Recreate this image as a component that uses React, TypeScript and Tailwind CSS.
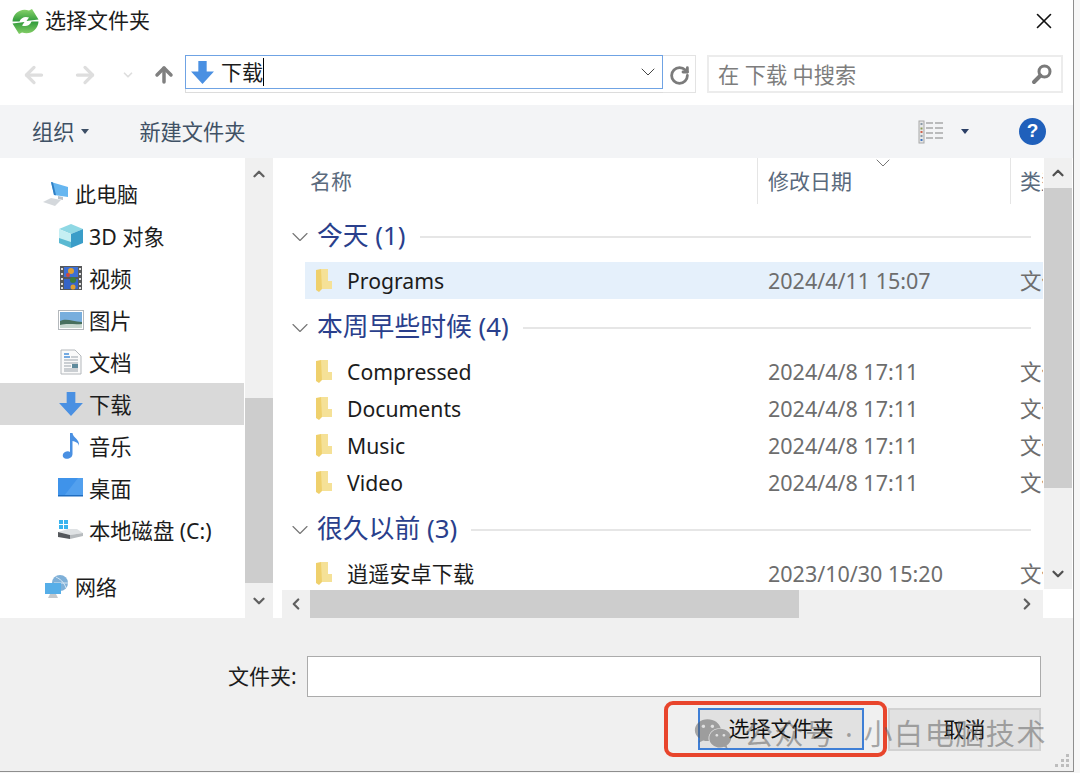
import { ArrowLeft, ArrowRight, ArrowUp, ChevronDown, ChevronLeft, ChevronRight, ChevronUp, RotateCw, X } from "lucide-react";
import { FaWeixin } from "react-icons/fa";
import type { ReactNode } from "react";

const FONT = "font-['Noto_Sans','Noto_Sans_CJK_SC',sans-serif]";

function AppIcon() {
  return (
    <svg width="27" height="27" viewBox="0 0 27 27" className="shrink-0">
      <defs>
        <linearGradient id="top-arrow" x1="0" y1="0" x2="0" y2="1">
          <stop offset="0" stopColor="#8ad46c" />
          <stop offset="1" stopColor="#2f9a3a" />
        </linearGradient>
        <linearGradient id="bottom-arrow" x1="0" y1="0" x2="0" y2="1">
          <stop offset="0" stopColor="#2f9a3a" />
          <stop offset="1" stopColor="#86cf68" />
        </linearGradient>
      </defs>
      <path d="M0.500 13.500C1 5 9 -0.500 17 2.500L20 1L26.500 11.500L14.500 13L17 9.500C13 8 9 9.500 7.500 13.500Z" fill="url(#top-arrow)" />
      <path d="M26.500 13.500C26 22 18 27.500 10 24.500L7 26L0.500 15.500L12.500 14L10 17.500C14 19 18 17.500 19.500 13.500Z" fill="url(#bottom-arrow)" />
    </svg>
  );
}

function DownArrow({ size }: { size: number }) {
  return (
    <svg width={size} height={size} viewBox="0 0 24 24" className="shrink-0">
      <path d="M8 1H16V11H23L12 23L1 11H8Z" fill="#4a90e2" />
    </svg>
  );
}

function Folder() {
  return (
    <svg width="17" height="25" viewBox="0 0 17 25" className="shrink-0">
      <path d="M5 1H12V13H16V21H5Z" fill="#f5e197" />
      <path d="M0 2L5 1L6 21L3 24L0 22Z" fill="#efd06c" />
    </svg>
  );
}

function PcIcon() {
  return (
    <svg width="28" height="26" viewBox="0 0 28 26">
      <path d="M15 15L20 16V19L15 18Z" fill="#b9c2cb" />
      <path d="M8 1L25 6V16L11 14Z" fill="#66b6f0" />
      <path d="M8 1L10 1.600L13 14.300L11 14Z" fill="#2f7fc4" />
      <path d="M0 21L8 17L18 19L12 25Z" fill="#d4d8dc" />
    </svg>
  );
}

function CubeIcon() {
  return (
    <svg width="26" height="26" viewBox="0 0 26 26">
      <path d="M13 1L25 6L13 11L1 6Z" fill="#8fd8e4" />
      <path d="M1 6L13 11V25L1 20Z" fill="#c6eff3" />
      <path d="M25 6L13 11V25L25 20Z" fill="#3a9dc8" />
      <path d="M1 15L13 19V25L1 20Z" fill="#5ab9d2" />
    </svg>
  );
}

function VideoIcon() {
  return (
    <svg width="24" height="26" viewBox="0 0 24 26">
      <rect x="1" y="1" width="22" height="24" fill="#56585a" />
      <rect x="5" y="2" width="14" height="10" fill="#3d6fd4" />
      <rect x="5" y="14" width="14" height="10" fill="#3564c8" />
      <circle cx="12" cy="6" r="3" fill="#e0a030" />
      <circle cx="9" cy="10" r="2" fill="#d0473a" />
      <circle cx="14" cy="15" r="3" fill="#3c7d3a" />
      <circle cx="14" cy="22" r="2.500" fill="#e0a030" />
      {[3, 8, 13, 18, 22].map((y) => (
        <g key={y}>
          <rect x="2" y={y} width="2" height="2" fill="#ddd" />
          <rect x="20" y={y} width="2" height="2" fill="#ddd" />
        </g>
      ))}
    </svg>
  );
}

function PictureIcon() {
  return (
    <svg width="26" height="20" viewBox="0 0 26 20">
      <rect x="0.500" y="0.500" width="25" height="19" fill="#fff" stroke="#b4b8bc" />
      <rect x="2" y="2" width="22" height="16" fill="#78aedd" />
      <path d="M2 11C8 8 14 11 24 12V18H2Z" fill="#47705e" />
      <path d="M2 15C10 13 16 15 24 14V18H2Z" fill="#c8d8d0" />
    </svg>
  );
}

function DocIcon() {
  return (
    <svg width="22" height="26" viewBox="0 0 22 26">
      <path d="M1 1H15L21 7V25H1Z" fill="#fafafa" stroke="#b4b8bc" />
      <path d="M4 5H9M4 8H10" stroke="#4a90d9" strokeWidth="1.500" />
      <path d="M11 8H18M4 11H18M4 14H18M4 17H11M4 20H18M4 22H18" stroke="#9ba3ab" />
      <rect x="12" y="15" width="6" height="4" fill="#5f8a9c" />
    </svg>
  );
}

function MusicIcon() {
  return (
    <svg width="22" height="28" viewBox="0 0 22 28">
      <path d="M10 1H12.500C13 6 20 7 19 14C18.500 10.500 15 9.500 12.500 9V22C12.500 26 8 27.500 5 26.500C2 25.500 2 21.500 5 20C7 19 9 19.200 10 20Z" fill="#4a90e2" />
    </svg>
  );
}

function DesktopIcon() {
  return (
    <svg width="26" height="20" viewBox="0 0 26 20">
      <rect x="0" y="0" width="25" height="18" fill="#3f93ea" />
      <path d="M6 18L20 0H25V18Z" fill="#52a0ee" />
      <rect x="0" y="17" width="25" height="1.500" fill="#1f6dc0" />
    </svg>
  );
}

function DiskIcon() {
  return (
    <svg width="26" height="20" viewBox="0 0 26 20">
      <rect x="1" y="0" width="4" height="4" fill="#39b4ee" />
      <rect x="6" y="0" width="4" height="4" fill="#39b4ee" />
      <rect x="1" y="5" width="4" height="4" fill="#39b4ee" />
      <rect x="6" y="5" width="4" height="4" fill="#39b4ee" />
      <path d="M0 12L10 9H19L25 13L12 15Z" fill="#dfe2e4" />
      <path d="M0 12L12 15V19L0 17Z" fill="#55585c" />
      <path d="M12 15L25 13V16L12 19Z" fill="#b7bbbe" />
    </svg>
  );
}

function NetworkIcon() {
  return (
    <svg width="26" height="26" viewBox="0 0 26 26">
      <circle cx="16" cy="9" r="8" fill="#7fb0d8" />
      <path d="M12 3C16 5 20 8 22 14M10 9H24" stroke="#d7e7f3" fill="none" />
      <rect x="1" y="9" width="16" height="11" fill="#56aee8" />
      <path d="M6 20H12L14 24H4Z" fill="#c3c8cc" />
    </svg>
  );
}

function SearchGlass() {
  return (
    <svg width="22" height="22" viewBox="0 0 22 22">
      <circle cx="13.500" cy="8.500" r="5.500" fill="none" stroke="#7a7a7a" strokeWidth="3" />
      <path d="M9.500 12.500L3 19" stroke="#7a7a7a" strokeWidth="4" strokeLinecap="round" />
    </svg>
  );
}

function ViewsIcon() {
  return (
    <svg width="26" height="24" viewBox="0 0 26 24">
      <rect x="1" y="1" width="5" height="22" fill="#e6e6e6" stroke="#a8a8a8" />
      <rect x="2.500" y="3" width="2" height="2" fill="#8a9aa8" />
      <rect x="2.500" y="7.500" width="2" height="2" fill="#8a9a58" />
      <rect x="2.500" y="11" width="2" height="2" fill="#d0604a" />
      <rect x="2.500" y="15" width="2" height="2" fill="#8a9aa8" />
      <rect x="2.500" y="19" width="2" height="2" fill="#3f74c0" />
      <path d="M8 3H15M17 3H25M8 8H15M17 8H25M8 13H15M17 13H25M8 18H15M17 18H25" stroke="#828282" strokeWidth="1.200" />
    </svg>
  );
}

function Caret({ color = "#3d4f66" }: { color?: string }) {
  return (
    <svg width="8" height="5" viewBox="0 0 8 5">
      <path d="M0 0H8L4 5Z" fill={color} />
    </svg>
  );
}

function Grip() {
  return (
    <svg width="15" height="14" viewBox="0 0 15 14">
      {[[11, 0], [6, 5], [11, 5], [0, 10], [6, 10], [11, 10]].map(([x, y]) => (
        <rect key={`${x}-${y}`} x={x} y={y} width="3" height="3" fill="#bdbdbd" />
      ))}
    </svg>
  );
}

const sideItems: { icon: ReactNode; label: string; active?: boolean }[] = [
  { icon: <CubeIcon />, label: "3D 对象" },
  { icon: <VideoIcon />, label: "视频" },
  { icon: <PictureIcon />, label: "图片" },
  { icon: <DocIcon />, label: "文档" },
  { icon: <DownArrow size={26} />, label: "下载", active: true },
  { icon: <MusicIcon />, label: "音乐" },
  { icon: <DesktopIcon />, label: "桌面" },
  { icon: <DiskIcon />, label: "本地磁盘 (C:)" },
];

function SideRow({ icon, label, active }: { icon: ReactNode; label: string; active?: boolean }) {
  return (
    <div className={`h-[42px] flex items-center pl-[58px] ${active ? "bg-[#d9d9d9]" : ""}`}>
      <div className="w-[26px] flex justify-center">{icon}</div>
      <span className="ml-[5px] pt-[2px] text-[21.300px] text-[#1c1c1c] whitespace-nowrap">{label}</span>
    </div>
  );
}

function GroupHeader({ title, className = "" }: { title: string; className?: string }) {
  return (
    <div className={`h-[37px] flex items-center pl-[11px] pr-[12px] ${className}`}>
      <ChevronDown size={28} strokeWidth={1} className="text-[#777] shrink-0" />
      <span className="ml-[3px] pb-[2px] text-[25.800px] text-[#2a3f8c] whitespace-nowrap">{title}</span>
      <div className="ml-[14px] flex-1 h-[2px] bg-[#e6e6e6]" />
    </div>
  );
}

function FileRow({ name, date, active, className = "" }: { name: string; date: string; active?: boolean; className?: string }) {
  return (
    <div className={`h-[37px] ml-[30px] flex items-center overflow-hidden ${active ? "bg-[#e5f0fb]" : ""} ${className}`}>
      <div className="w-[42px] pl-[11px] shrink-0">
        <Folder />
      </div>
      <span className="w-[421px] shrink-0 pt-[1px] text-[21.200px] text-[#1c1c1c] whitespace-nowrap">{name}</span>
      <span className="w-[253px] shrink-0 pt-[1px] text-[21.500px] text-[#6d6d6d] whitespace-nowrap">{date}</span>
      <span className="-ml-px pt-[1px] text-[21.500px] text-[#6d6d6d] whitespace-nowrap">文件夹</span>
    </div>
  );
}

export default function App() {
  return (
    <div className={`relative w-[1080px] h-[773px] overflow-hidden bg-[#f7f7f7] ${FONT}`}>
      <div className="w-[1074px] h-[772px] flex flex-col bg-white border-r border-b border-[#8e8e8e]">
        {/* title bar */}
        <div className="h-[42px] flex items-center pl-[12px] pr-[16px] shrink-0">
          <AppIcon />
          <span className="ml-[6px] text-[21px] text-[#1c1c1c]">选择文件夹</span>
          <X size={26} strokeWidth={1.500} className="ml-auto text-[#111]" />
        </div>

        {/* address bar */}
        <div className="h-[63px] pt-[13px] flex items-start shrink-0">
          <div className="w-[185px] h-[40px] flex items-center pl-[21px]">
            <ArrowLeft size={26} strokeWidth={3} className="text-[#dedede]" />
            <ArrowRight size={26} strokeWidth={3} className="ml-[25px] text-[#dedede]" />
            <ChevronDown size={14} strokeWidth={3} className="ml-[23px] text-[#dedede]" />
            <ArrowUp size={24} strokeWidth={3.500} className="ml-[17px] text-[#808080]" />
          </div>
          <div className="w-[478px] h-[38px] border-b border-l border-[#dcdcdc]">
            <div className="h-[34px] -ml-px border border-[#6fa3e4] flex items-center pl-[4px] pr-[2px]">
              <DownArrow size={25} />
              <span className="ml-[6px] pt-[2px] text-[21px] text-[#1c1c1c]">下载</span>
              <div className="w-px h-[28px] bg-black" />
              <ChevronDown size={24} strokeWidth={1} className="ml-auto text-[#444]" />
            </div>
          </div>
          <div className="w-[33px] h-[38px] pt-[2px] border-y border-r border-[#e3e3e3] flex items-center justify-center">
            <RotateCw size={21} strokeWidth={3.200} className="text-[#7b7b7b]" />
          </div>
          <div className="ml-[11px] w-[356px] h-[38px] border-2 border-[#ececec] flex items-center pl-[9px] pr-[8px]">
            <span className="pt-[2px] text-[21.200px] text-[#7d7d7d] whitespace-nowrap">在 下载 中搜索</span>
            <div className="ml-auto">
              <SearchGlass />
            </div>
          </div>
        </div>

        {/* command bar */}
        <div className="h-[53px] bg-[#f3f4f6] flex items-center pl-[32px] pr-[27px] shrink-0">
          <span className="text-[21.200px] text-[#3f5165]">组织</span>
          <div className="ml-[7px]">
            <Caret />
          </div>
          <span className="ml-[50px] text-[21.200px] text-[#3f5165]">新建文件夹</span>
          <div className="ml-auto">
            <ViewsIcon />
          </div>
          <div className="ml-[17px]">
            <Caret color="#2b3f66" />
          </div>
          <div className="ml-[50px] w-[27px] h-[27px] rounded-full bg-[#2060bb] flex items-center justify-center text-white text-[19px] font-bold font-['Liberation_Sans',sans-serif]">
            ?
          </div>
        </div>

        {/* main panes */}
        <div className="h-[460px] flex shrink-0">
          <div className="w-[244px] shrink-0 pt-[15px]">
            <div className="h-[42px] flex items-center pl-[43px]">
              <PcIcon />
              <span className="ml-[4px] pt-[2px] text-[21px] text-[#1c1c1c]">此电脑</span>
            </div>
            {sideItems.map((item) => (
              <SideRow key={item.label} {...item} />
            ))}
            <div className="h-[42px] mt-[15px] flex items-center pl-[44px]">
              <NetworkIcon />
              <span className="ml-[5px] pt-[2px] text-[21px] text-[#1c1c1c]">网络</span>
            </div>
          </div>

          <div className="ml-px w-[28px] shrink-0 bg-[#f0f0f0] flex flex-col items-center">
            <div className="h-[32px] flex items-center justify-center">
              <ChevronUp size={18} strokeWidth={3} className="text-[#606060]" />
            </div>
            <div className="flex-1 w-full flex flex-col justify-end">
              <div className="h-[185px] w-full bg-[#cdcdcd]" />
            </div>
            <div className="h-[35px] flex items-center justify-center">
              <ChevronDown size={18} strokeWidth={3} className="text-[#606060]" />
            </div>
          </div>

          <div className="ml-[2px] w-[768px] shrink-0 flex flex-col">
            <div className="h-[432px] overflow-hidden">
              <div className="h-[46px] flex relative">
                <span className="absolute left-[35px] top-[8px] text-[21px] text-[#5a6a7d]">名称</span>
                <div className="absolute left-[482px] top-0 h-[46px] w-px bg-[#e5e5e5]" />
                <ChevronDown size={24} strokeWidth={1} className="absolute left-[596px] -top-[7px] text-[#777]" />
                <span className="absolute left-[493px] top-[8px] text-[21px] text-[#5a6a7d]">修改日期</span>
                <div className="absolute left-[735px] top-0 h-[46px] w-px bg-[#e5e5e5]" />
                <span className="absolute left-[745px] top-[8px] text-[21px] text-[#5a6a7d] whitespace-nowrap">类型</span>
              </div>
              <GroupHeader title="今天 (1)" className="mt-[14px]" />
              <FileRow name="Programs" date="2024/4/11 15:07" active className="mt-[7px]" />
              <GroupHeader title="本周早些时候 (4)" className="mt-[10px]" />
              <FileRow name="Compressed" date="2024/4/8 17:11" className="mt-[7px]" />
              <FileRow name="Documents" date="2024/4/8 17:11" />
              <FileRow name="Music" date="2024/4/8 17:11" />
              <FileRow name="Video" date="2024/4/8 17:11" />
              <GroupHeader title="很久以前 (3)" className="mt-[10px]" />
              <FileRow name="逍遥安卓下载" date="2023/10/30 15:20" className="mt-[7px]" />
            </div>
            <div className="h-[28px] ml-[7px] bg-[#f0f0f0] flex items-center">
              <div className="w-[28px] flex justify-center">
                <ChevronLeft size={18} strokeWidth={3} className="text-[#606060]" />
              </div>
              <div className="w-[489px] h-full bg-[#cdcdcd]" />
              <div className="ml-auto w-[32px] flex justify-center">
                <ChevronRight size={18} strokeWidth={3} className="text-[#606060]" />
              </div>
            </div>
          </div>

          <div className="ml-px w-[28px] shrink-0 flex flex-col">
            <div className="h-[431px] bg-[#f0f0f0] flex flex-col items-center">
              <div className="h-[30px] flex items-center justify-center">
                <ChevronUp size={18} strokeWidth={3} className="text-[#505050]" />
              </div>
              <div className="w-full h-[300px] bg-[#cdcdcd]" />
              <div className="mt-auto h-[30px] flex items-center justify-center">
                <ChevronDown size={18} strokeWidth={3} className="text-[#505050]" />
              </div>
            </div>
          </div>
        </div>

        {/* footer */}
        <div className="flex-1 bg-[#f0f0f0] relative pl-[228px] pr-[32px] pt-[38px]">
          <div className="flex items-center gap-[10px]">
            <span className="text-[21px] text-[#1c1c1c] whitespace-nowrap">文件夹:</span>
            <div className="flex-1 h-[41px] bg-white border border-[#ababab]" />
          </div>
          <div className="mt-[11px] flex justify-end gap-[24px]">
            <div className="w-[166px] h-[42px] bg-[#e1e1e1] border-2 border-[#3f7fd6] flex items-center justify-center text-[21px] text-[#111]">
              选择文件夹
            </div>
            <div className="w-[153px] h-[43px] bg-[#e1e1e1] border-2 border-[#d2d2d2] flex items-center justify-center text-[21px] text-[#111]">
              取消
            </div>
          </div>
          <div className="absolute right-[3px] bottom-[3px]">
            <Grip />
          </div>
        </div>
      </div>

      {/* red annotation and watermark sit on top of the screenshot */}
      <div className="absolute left-[664px] top-[701px] w-[223px] h-[56px] border-[4px] border-[#e8452c] rounded-[9px]" />
      <div className="absolute left-[694px] top-[712px] flex items-center text-[#5a5a5a]/50 pointer-events-none">
        <FaWeixin size={38} />
        <span className="ml-[12px] text-[29px] tracking-[1.600px] whitespace-nowrap">公众号 · 小白电脑技术</span>
      </div>
    </div>
  );
}
